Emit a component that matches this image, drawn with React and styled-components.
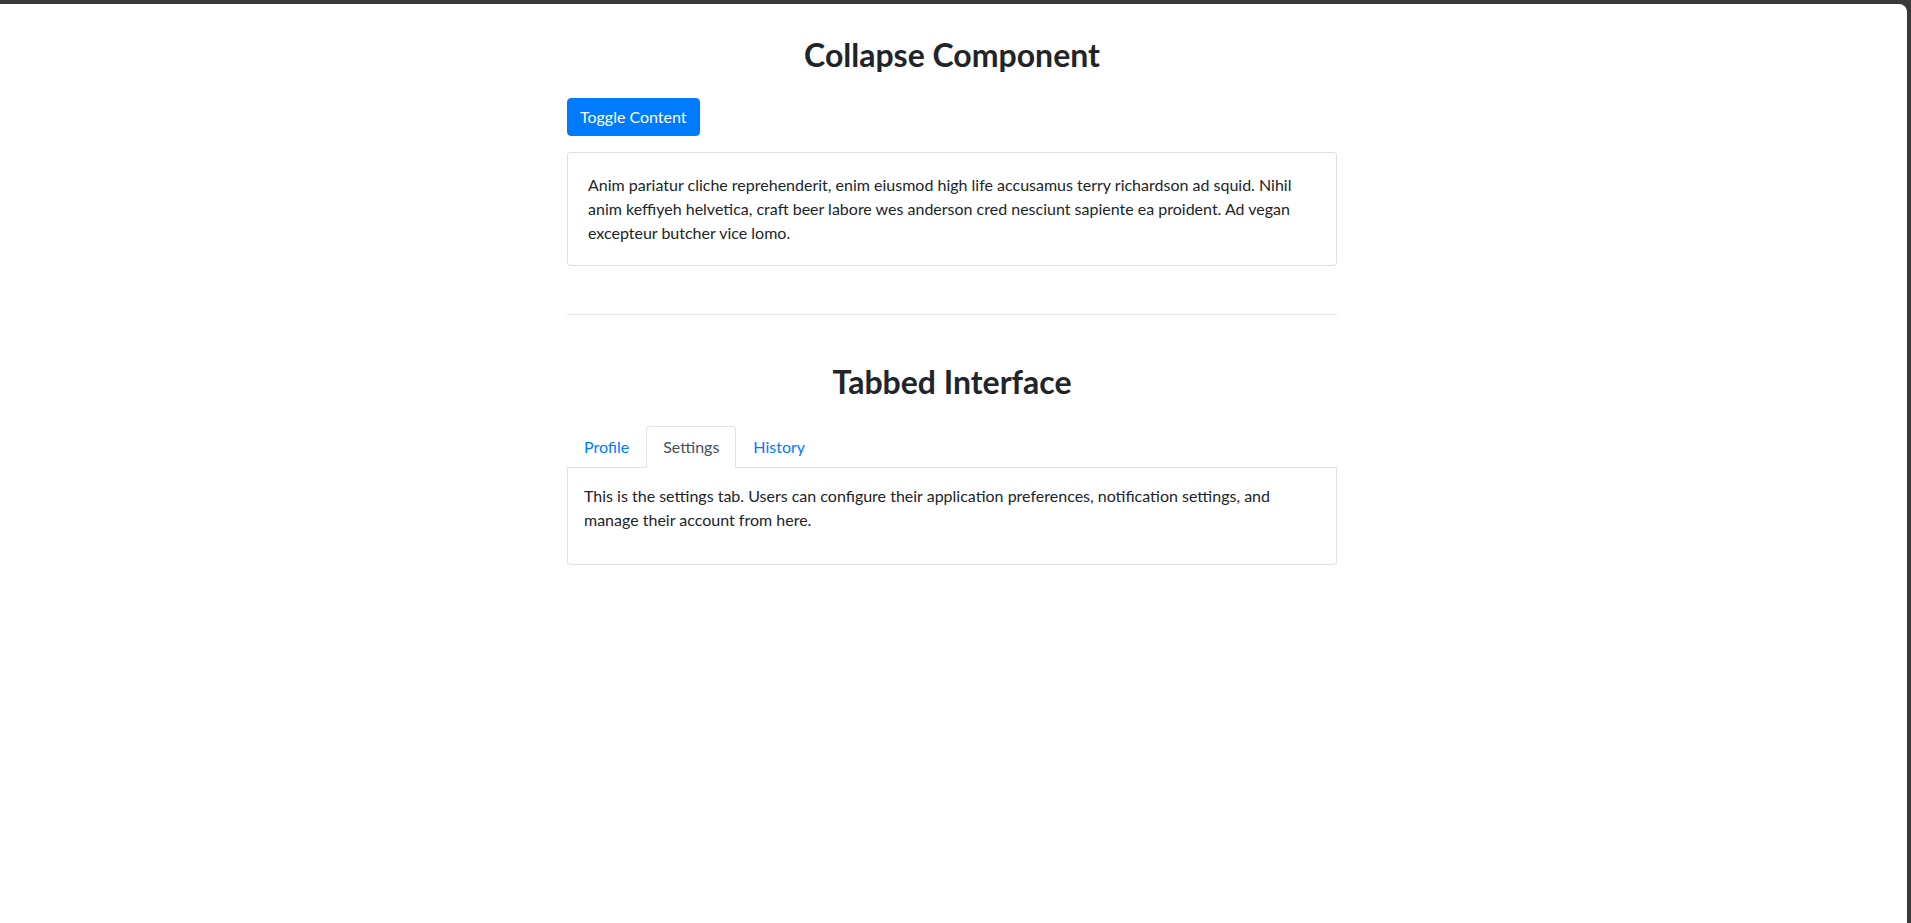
import { useState } from "react";
import styled, { createGlobalStyle } from "styled-components";

const GlobalStyle = createGlobalStyle`
  html, body {
    margin: 0;
    background: #3a3a3a;
  }
  body {
    font-family: Lato, "Noto Sans", sans-serif;
    font-size: 16px;
    line-height: 1.5;
    color: #212529;
  }
  * {
    box-sizing: border-box;
  }
`;

const Window = styled.div`
  margin: 4px 4px 0 0;
  padding-right: 3px;
  min-height: calc(100vh - 4px);
  background: #fff;
  border-top-right-radius: 8px;
`;

const Container = styled.main`
  max-width: 770px;
  margin: 0 auto;
  padding-top: 32px;
`;

const SectionTitle = styled.h2`
  margin: 0 0 24px;
  font-size: 32px;
  font-weight: 700;
  line-height: 1.2;
  text-align: center;
  color: #212529;
`;

const ToggleButton = styled.button`
  display: inline-block;
  height: 38px;
  padding: 6px 12px;
  border: 1px solid #007bff;
  border-radius: 4px;
  background: #007bff;
  color: #fff;
  font: inherit;
  line-height: 24px;
  cursor: pointer;
`;

const Card = styled.div`
  margin-top: 16px;
  border: 1px solid rgba(0, 0, 0, 0.125);
  border-radius: 4px;
  background: #fff;
`;

const CardBody = styled.div`
  padding: 20px;
`;

const Divider = styled.hr`
  margin: 48px 0;
  border: 0;
  border-top: 1px solid rgba(0, 0, 0, 0.1);
`;

const TabList = styled.ul`
  display: flex;
  margin: 0;
  padding: 0;
  list-style: none;
  border-bottom: 1px solid #dee2e6;
`;

const Tab = styled.button`
  display: block;
  margin-bottom: -1px;
  padding: 8px 16px;
  border-style: solid;
  border-width: 1px;
  border-color: ${(p) => (p.$active ? "#dee2e6 #dee2e6 #fff" : "transparent")};
  border-top-left-radius: 4px;
  border-top-right-radius: 4px;
  background: ${(p) => (p.$active ? "#fff" : "transparent")};
  box-shadow: none;
  color: ${(p) => (p.$active ? "#495057" : "#007bff")};
  font: inherit;
  line-height: 24px;
  outline: none;
  cursor: pointer;
`;

const TabPane = styled.div`
  padding: 16px;
  border: 1px solid #dee2e6;
  border-top: 0;
  border-bottom-left-radius: 4px;
  border-bottom-right-radius: 4px;

  p {
    margin: 0 0 16px;
  }
`;

const Text = styled.p`
  margin: 0;
`;

const tabs = [
  {
    id: "profile",
    label: "Profile",
    text: "This is the profile tab. Users can view and edit their personal information, avatar, and contact details from here.",
  },
  {
    id: "settings",
    label: "Settings",
    text: "This is the settings tab. Users can configure their application preferences, notification settings, and manage their account from here.",
  },
  {
    id: "history",
    label: "History",
    text: "This is the history tab. Users can review their recent activity, past orders, and previous sessions from here.",
  },
];

function CollapseSection() {
  const [open, setOpen] = useState(true);
  return (
    <section>
      <SectionTitle>Collapse Component</SectionTitle>
      <ToggleButton onClick={() => setOpen(!open)}>Toggle Content</ToggleButton>
      {open && (
        <Card>
          <CardBody>
            <Text>
              Anim pariatur cliche reprehenderit, enim eiusmod high life accusamus terry
              richardson ad squid. Nihil anim keffiyeh helvetica, craft beer labore wes
              anderson cred nesciunt sapiente ea proident. Ad vegan excepteur butcher vice
              lomo.
            </Text>
          </CardBody>
        </Card>
      )}
    </section>
  );
}

function TabsSection() {
  const [active, setActive] = useState("settings");
  const current = tabs.find((t) => t.id === active);
  return (
    <section>
      <SectionTitle>Tabbed Interface</SectionTitle>
      <TabList>
        {tabs.map((t) => (
          <li key={t.id}>
            <Tab $active={t.id === active} onClick={() => setActive(t.id)}>
              {t.label}
            </Tab>
          </li>
        ))}
      </TabList>
      <TabPane>
        <p>{current.text}</p>
      </TabPane>
    </section>
  );
}

export default function App() {
  return (
    <>
      <GlobalStyle />
      <Window>
        <Container>
          <CollapseSection />
          <Divider />
          <TabsSection />
        </Container>
      </Window>
    </>
  );
}
